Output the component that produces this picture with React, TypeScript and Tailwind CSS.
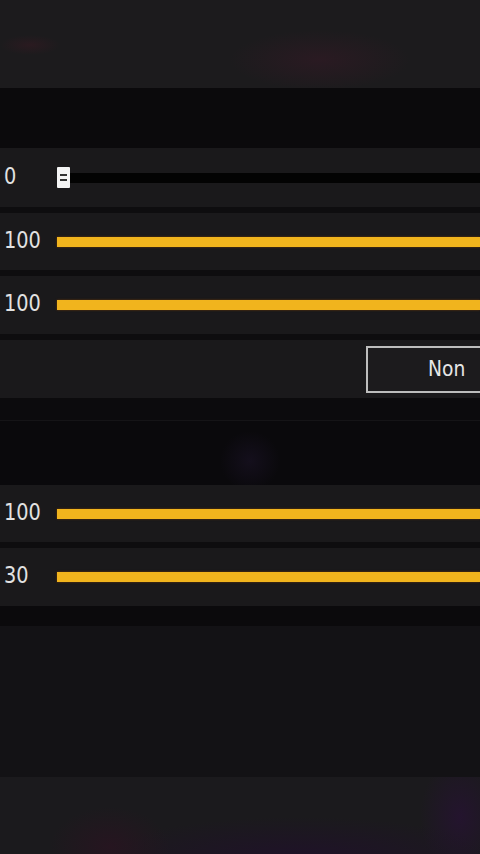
import React from 'react';

const font = { fontFamily: '"DejaVu Sans", "Liberation Sans", sans-serif' };

// 黄色いスライダー行
function BarRow({ value, h = 'h-[57px]' }: { value: string; h?: string }) {
  return (
    <div className={`${h} bg-[#1a191b] flex items-center`}>
      <div className="w-[57px] pl-[4px]">
        <span className="inline-block origin-left scale-x-[0.84] text-[23px] leading-none text-[#e2e2e2]">{value}</span>
      </div>
      <div className="flex-1 h-[10px] bg-[#f1b41d] shadow-[0_0_2px_#6b3a06]" />
    </div>
  );
}

export default function App() {
  return (
    <div className="w-[480px] h-[854px] overflow-hidden bg-[#0e0d0f] flex flex-col" style={font}>
      {/* 上部の背景 */}
      <div className="h-[88px] bg-[#1c1b1d] bg-[radial-gradient(ellipse_90px_30px_at_320px_60px,#2a1a22,transparent),radial-gradient(ellipse_30px_10px_at_30px_45px,#2a1a20,transparent)]" />
      <div className="h-[60px] bg-[#0b0a0c]" />

      {/* スライダー 0 */}
      <div className="h-[59px] bg-[#1a191b] flex items-center">
        <div className="w-[57px] pl-[4px]">
          <span className="inline-block origin-left scale-x-[0.84] text-[23px] leading-none text-[#e2e2e2]">0</span>
        </div>
        <div className="w-[13px] h-[21px] bg-[#f4f4f4] flex flex-col items-center justify-center gap-[3px] rounded-[1px]">
          <div className="w-[7px] h-[2px] bg-[#333]" />
          <div className="w-[7px] h-[2px] bg-[#333]" />
        </div>
        <div className="flex-1 h-[10px] bg-[#030303]" />
      </div>

      <div className="h-[6px]" />
      <BarRow value="100" />
      <div className="h-[6px]" />
      <BarRow value="100" h="h-[58px]" />
      <div className="h-[6px]" />

      {/* ボタン行 */}
      <div className="h-[58px] bg-[#1a191b] flex items-center justify-end">
        <div className="w-[124px] h-[47px] -mr-[10px] border-2 border-[#bdbdbd] bg-[#1c1b1d] flex items-center pl-[60px]">
          <span className="inline-block origin-left scale-x-[0.85] text-[22px] leading-none text-[#e6e6e6]">Non</span>
        </div>
      </div>

      <div className="h-[22px] bg-[#0c0b0d]" />
      <div className="h-[65px] bg-[#0a090c] border-t border-[#151417] bg-[radial-gradient(ellipse_30px_30px_at_250px_40px,#140f1c,transparent)]" />

      <BarRow value="100" />
      <div className="h-[6px]" />
      <BarRow value="30" h="h-[58px]" />

      <div className="h-[20px] bg-[#0b0a0c]" />
      <div className="h-[151px] bg-[#131215]" />
      <div className="flex-1 bg-[#1b1a1d] bg-[radial-gradient(ellipse_60px_40px_at_110px_70px,#261520,transparent),radial-gradient(ellipse_200px_40px_at_300px_80px,#1f1228,transparent),radial-gradient(ellipse_40px_60px_at_460px_40px,#24142e,transparent)]" />
    </div>
  );
}
